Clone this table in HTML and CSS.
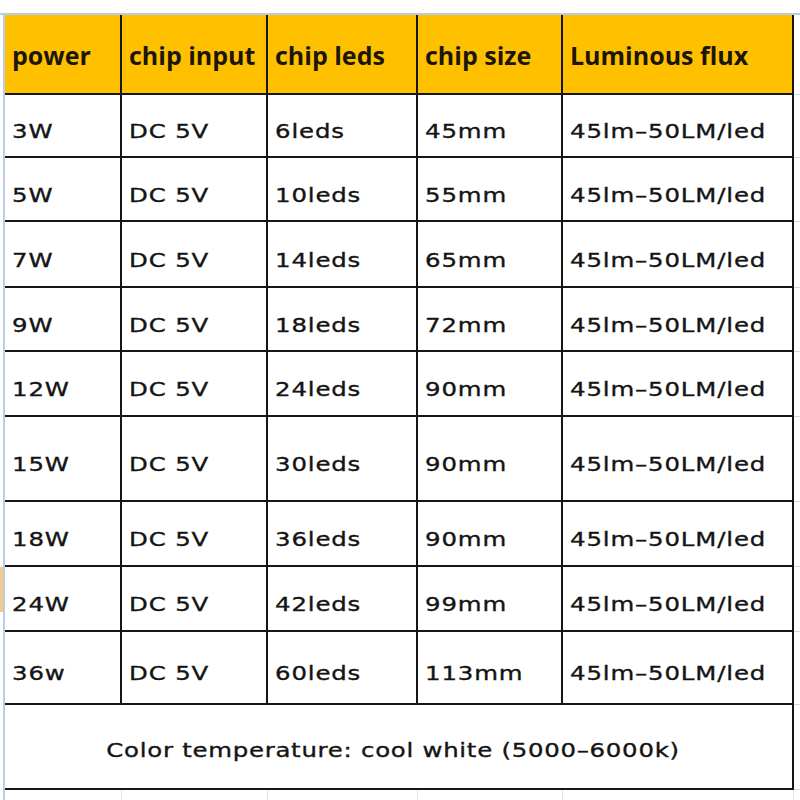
FILE: index.html
```html
<!DOCTYPE html>
<html>
<head>
<meta charset="utf-8">
<link rel="stylesheet" href="styles.css">
</head>
<body>
<div class="sheet">
  <div class="topbar"></div>
  <div class="main">
    <div class="gutter">
      <div class="gutter-space"></div>
      <div class="gutter-mark"></div>
    </div>
    <div class="grid">
      <div class="cell head">power</div>
      <div class="cell head">chip input</div>
      <div class="cell head">chip leds</div>
      <div class="cell head">chip size</div>
      <div class="cell head">Luminous flux</div>
      <div class="gut"></div>

      <div class="cell"><span class="t">3W</span></div><div class="cell"><span class="t">DC 5V</span></div><div class="cell"><span class="t">6leds</span></div><div class="cell"><span class="t">45mm</span></div><div class="cell"><span class="t">45lm–50LM/led</span></div><div class="gut"></div>
      <div class="cell"><span class="t">5W</span></div><div class="cell"><span class="t">DC 5V</span></div><div class="cell"><span class="t">10leds</span></div><div class="cell"><span class="t">55mm</span></div><div class="cell"><span class="t">45lm–50LM/led</span></div><div class="gut"></div>
      <div class="cell"><span class="t">7W</span></div><div class="cell"><span class="t">DC 5V</span></div><div class="cell"><span class="t">14leds</span></div><div class="cell"><span class="t">65mm</span></div><div class="cell"><span class="t">45lm–50LM/led</span></div><div class="gut"></div>
      <div class="cell"><span class="t">9W</span></div><div class="cell"><span class="t">DC 5V</span></div><div class="cell"><span class="t">18leds</span></div><div class="cell"><span class="t">72mm</span></div><div class="cell"><span class="t">45lm–50LM/led</span></div><div class="gut"></div>
      <div class="cell"><span class="t">12W</span></div><div class="cell"><span class="t">DC 5V</span></div><div class="cell"><span class="t">24leds</span></div><div class="cell"><span class="t">90mm</span></div><div class="cell"><span class="t">45lm–50LM/led</span></div><div class="gut"></div>
      <div class="cell"><span class="t">15W</span></div><div class="cell"><span class="t">DC 5V</span></div><div class="cell"><span class="t">30leds</span></div><div class="cell"><span class="t">90mm</span></div><div class="cell"><span class="t">45lm–50LM/led</span></div><div class="gut"></div>
      <div class="cell"><span class="t">18W</span></div><div class="cell"><span class="t">DC 5V</span></div><div class="cell"><span class="t">36leds</span></div><div class="cell"><span class="t">90mm</span></div><div class="cell"><span class="t">45lm–50LM/led</span></div><div class="gut"></div>
      <div class="cell"><span class="t">24W</span></div><div class="cell"><span class="t">DC 5V</span></div><div class="cell"><span class="t">42leds</span></div><div class="cell"><span class="t">99mm</span></div><div class="cell"><span class="t">45lm–50LM/led</span></div><div class="gut"></div>
      <div class="cell"><span class="t">36w</span></div><div class="cell"><span class="t">DC 5V</span></div><div class="cell"><span class="t">60leds</span></div><div class="cell"><span class="t">113mm</span></div><div class="cell"><span class="t">45lm–50LM/led</span></div><div class="gut"></div>

      <div class="cell note"><span class="t">Color temperature: cool white (5000–6000k)</span></div>
      <div class="gut"></div>

      <div class="tail"></div><div class="tail"></div><div class="tail"></div><div class="tail"></div><div class="tail"></div><div class="tail last"></div>
    </div>
  </div>
</div>
</body>
</html>
```

FILE: styles.css
```css
html, body {
  margin: 0;
  padding: 0;
  background: #ffffff;
}

.sheet {
  width: 800px;
  height: 800px;
  display: flex;
  flex-direction: column;
  overflow: hidden;
}

.topbar {
  height: 13px;
  border-bottom: 2px solid #b7cdea;
  flex: none;
}

.main {
  display: flex;
  flex: 1;
}

.gutter {
  width: 3px;
  display: flex;
  flex-direction: column;
  flex: none;
}

.gutter-space {
  height: 552px;
}

.gutter-mark {
  height: 45px;
  background: #f6c888;
}

.grid {
  border-left: 2px solid #b7cdea;
  display: grid;
  grid-template-columns: 117px 146px 150px 145px 231px 6px;
  grid-template-rows: 80px 63px 64px 66px 64px 65px 85px 65px 65px 73px 85px 20px;
  flex: none;
}

.cell {
  box-sizing: border-box;
  border-right: 2px solid #161616;
  border-bottom: 2px solid #161616;
  display: flex;
  align-items: center;
  padding: 11px 0 0 7px;
  font-family: "DejaVu Sans", sans-serif;
  font-size: 20px;
  color: #141414;
  white-space: nowrap;
}

.t {
  display: inline-block;
  transform: scaleX(1.22);
  transform-origin: left center;
  letter-spacing: 0.7px;
  -webkit-text-stroke: 0.35px #141414;
}

.head {
  background: #ffc000;
  font-family: "Open Sans", sans-serif;
  font-weight: 700;
  font-size: 25px;
  color: #1c1608;
  padding: 2px 0 0 7px;
}

.note {
  grid-column: 1 / 6;
  justify-content: center;
  padding: 6px 10px 0 0;
}

.note .t {
  transform-origin: center center;
  letter-spacing: 0.6px;
}

.gut {
  box-sizing: border-box;
  border-bottom: 1px solid #dadada;
}

.tail {
  box-sizing: border-box;
  border-right: 1px solid #e2e2e2;
}

.tail.last {
  border-right: none;
}
```
